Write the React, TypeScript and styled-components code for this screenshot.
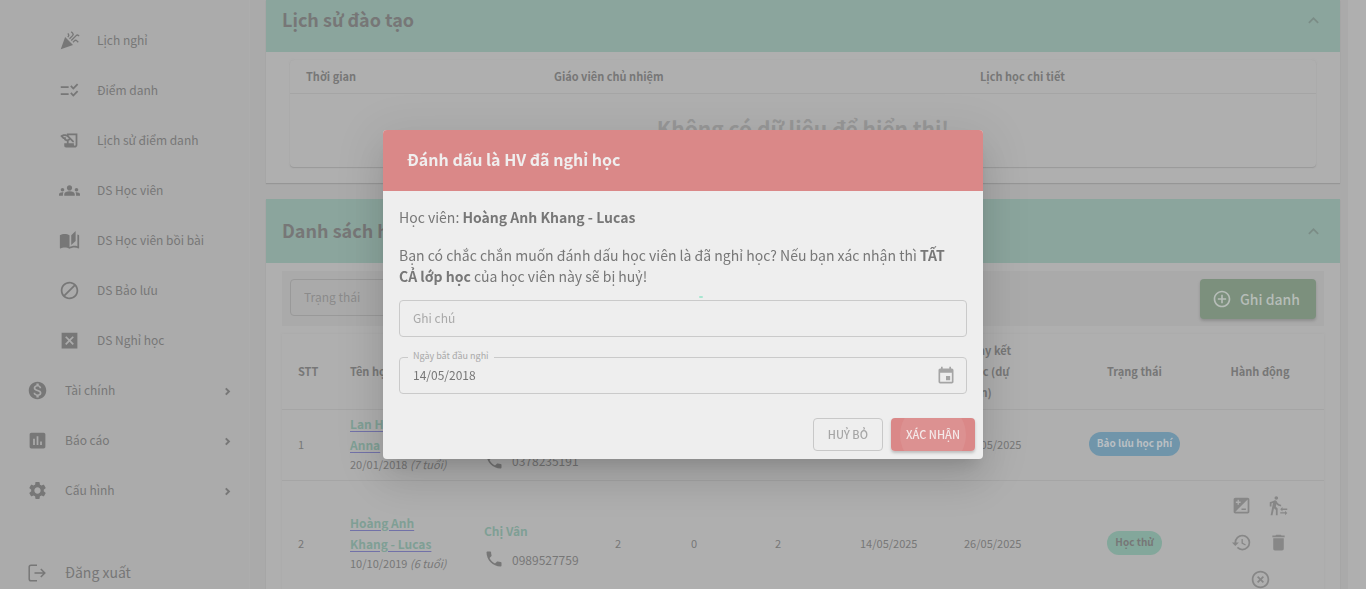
import React from "react";
import styled, { createGlobalStyle } from "styled-components";
import {
  MdCelebration,
  MdChecklistRtl,
  MdHistoryEdu,
  MdGroups,
  MdAutoStories,
  MdDoNotDisturbAlt,
  MdMonetizationOn,
  MdAssessment,
  MdSettings,
  MdControlPoint,
  MdPhone,
  MdEvent,
  MdIso,
  MdTransferWithinAStation,
  MdHistory,
  MdDelete,
  MdHighlightOff,
  MdExpandLess,
} from "react-icons/md";

const color = {
  page: "#aaaaaa",
  paper: "#afafaf",
  line: "#a5a5a5",
  text: "#777777",
  teal: "#8ba59d",
  tealText: "#7f9f95",
  green: "#7c907d",
  dialog: "#eeeeee",
  red: "#da8888",
};

const Global = createGlobalStyle`
  *, *::before, *::after { box-sizing: border-box; }
  body {
    margin: 0;
    background: ${color.paper};
    color: ${color.text};
    font-family: "Noto Sans CJK JP", "Noto Sans", sans-serif;
    font-size: 12px;
    line-height: 21px;
  }
  button, input { font: inherit; color: inherit; }
  button { cursor: pointer; }
  a { color: inherit; text-decoration: none; }
  b { font-weight: 700; }
`;

const Shell = styled.div`
  display: flex;
  height: 100vh;
  overflow: hidden;
`;

const Sidebar = styled.nav`
  flex: 0 0 250px;
  padding: 15px 17px 0 0;
  background: #ababab;
  border-right: 1px solid #adadad;
`;

const NavLink = styled.a<{ $nested?: boolean }>`
  display: flex;
  align-items: center;
  height: 50px;
  padding-left: ${(p) => (p.$nested ? 59 : 27)}px;
  svg { flex: none; }
`;

const NavText = styled.span`
  flex: 1;
  margin-left: 17px;
  padding-bottom: 2px;
`;

const LogoutLink = styled(NavLink)`
  margin-top: 33px;
  padding-left: 26px;
  font-size: 14px;
`;

const Caret = styled.svg`
  margin-top: 2px;
`;

const Main = styled.main`
  flex: 1;
  min-width: 0;
  padding: 0 8px 0 16px;
  margin-right: 18px;
  background: ${color.page};
`;

const Card = styled.section`
  margin-bottom: 16px;
  background: ${color.paper};
  box-shadow: 0 1px 1px #969696;
`;

const CardHeader = styled.button<{ $cut?: boolean }>`
  display: flex;
  align-items: center;
  justify-content: space-between;
  width: 100%;
  height: ${(p) => (p.$cut ? 52 : 64)}px;
  padding: ${(p) => (p.$cut ? "0 16px 12px" : "0 16px")};
  border: 0;
  background: ${color.teal};
  text-align: left;
  svg { color: #7b8c86; }
`;

const CardTitle = styled.span`
  padding-bottom: 2px;
  font-size: 18px;
  font-weight: 700;
`;

const HistoryBody = styled.div`
  padding: 8px 24px 16px;
`;

const HistoryTable = styled.table`
  width: 100%;
  table-layout: fixed;
  border-collapse: collapse;
  border-radius: 4px;
  box-shadow: 0 1px 1px #999999, 0 0 2px #a8a8a8;
  th {
    height: 33px;
    padding: 0 16px;
    border-bottom: 1px solid ${color.line};
    font-size: 11px;
    text-align: left;
  }
`;

const EmptyCell = styled.td`
  height: 74px;
  padding: 0 16px 3px;
  color: #979797;
  font-size: 21px;
  font-weight: 700;
  text-align: center;
`;

const ListBody = styled.div`
  padding: 8px 16px;
`;

const FilterBar = styled.div`
  display: flex;
  align-items: flex-start;
  justify-content: space-between;
  padding: 8px 8px 7px;
  background: ${color.page};
`;

const FilterInput = styled.input`
  width: 240px;
  height: 37px;
  padding: 0 13px 2px;
  border: 1px solid #999999;
  border-radius: 4px;
  background: transparent;
  &::placeholder { color: #8b8b8b; opacity: 1; }
`;

const EnrollButton = styled.button`
  display: flex;
  align-items: center;
  gap: 8px;
  height: 40px;
  padding: 0 16px 0 12px;
  border: 0;
  border-radius: 4px;
  background: ${color.green};
  color: #b6bdb8;
  font-size: 14px;
  font-weight: 500;
  box-shadow: 0 2px 3px #8f8f8f;
`;

const StudentTable = styled.table`
  width: 100%;
  margin-top: 8px;
  table-layout: fixed;
  border-collapse: collapse;
  box-shadow: 0 0 2px #a8a8a8;
  font-size: 11px;
  th, td {
    padding: 6px 16px;
    border-bottom: 1px solid ${color.line};
    text-align: left;
    white-space: nowrap;
  }
  td { padding: 4px 16px 5px; }
`;

const NameTd = styled.td`
  && { padding: 3px 16px 7px; }
`;

const CenterTh = styled.th`
  && { text-align: center; padding: 0; }
`;

const CenterTd = styled.td`
  && { text-align: center; padding: 6px 0 8px; }
`;

const StudentLink = styled.a`
  display: block;
  color: ${color.tealText};
  font-size: 12px;
  font-weight: 700;
  text-decoration: underline;
  text-decoration-color: #7272a8;
  text-underline-offset: 2px;
`;

const Birth = styled.div`
  line-height: 18px;
`;

const ContactName = styled.div`
  margin-top: 3px;
  color: ${color.tealText};
  font-size: 12px;
  font-weight: 700;
`;

const Phone = styled.a`
  display: flex;
  align-items: center;
  gap: 8px;
  margin-top: 8px;
  font-size: 12px;
`;

const Chip = styled.span<{ $tone: "blue" | "teal" }>`
  display: inline-block;
  height: 24px;
  padding: 0 8px;
  border-radius: 12px;
  background: ${(p) => (p.$tone === "blue" ? "#7095aa" : "#83a79b")};
  color: ${(p) => (p.$tone === "blue" ? "#b9bfc3" : color.text)};
  font-size: 10px;
  font-weight: 700;
  line-height: 22px;
`;

const Actions = styled.div`
  display: flex;
  flex-wrap: wrap;
  justify-content: center;
  width: 74px;
  margin: 0 auto;
`;

const ActionButton = styled.button`
  display: flex;
  align-items: center;
  justify-content: center;
  width: 37px;
  height: 37px;
  padding: 0;
  border: 0;
  background: transparent;
  color: #878787;
`;

const Overlay = styled.div`
  position: fixed;
  inset: 0;
  display: flex;
  align-items: center;
  justify-content: center;
`;

const Dialog = styled.div`
  width: 600px;
  max-width: calc(100% - 64px);
  overflow: hidden;
  border-radius: 4px;
  background: ${color.dialog};
  box-shadow: 0 11px 15px -7px rgba(0, 0, 0, 0.12), 0 24px 38px 3px rgba(0, 0, 0, 0.08),
    0 9px 46px 8px rgba(0, 0, 0, 0.08);
`;

const DialogTitle = styled.h2`
  margin: 0;
  padding: 19px 24px 21px;
  background: ${color.red};
  color: #f0eeee;
  font-size: 16px;
  font-weight: 700;
`;

const DialogBody = styled.div`
  display: flex;
  flex-direction: column;
  padding: 16px;
  font-size: 14px;
  p { margin: 0 0 17px; padding-right: 8px; }
  p + p { margin-bottom: 13px; }
`;

const Field = styled.div`
  position: relative;
  display: flex;
  align-items: center;
  height: 37px;
  padding-right: 8px;
  border: 1px solid #cacaca;
  border-radius: 4px;
  & + & { margin-top: 20px; }
`;

const FieldInput = styled.input`
  flex: 1;
  min-width: 0;
  height: 35px;
  padding: 0 13px 2px;
  border: 0;
  outline: 0;
  background: transparent;
  font-size: 12px;
  &::placeholder { color: #a9a9a9; opacity: 1; }
`;

const FloatingLabel = styled.label`
  position: absolute;
  top: -13px;
  left: 8px;
  padding: 0 5px;
  background: ${color.dialog};
  color: #a9a9a9;
  font-size: 9px;
`;

const PickerButton = styled.button`
  display: flex;
  padding: 2px;
  border: 0;
  background: transparent;
  color: #a5a5a5;
`;

const DialogActions = styled.div`
  display: flex;
  justify-content: flex-end;
  gap: 8px;
  padding: 8px;
`;

const DialogButton = styled.button<{ $primary?: boolean }>`
  position: relative;
  overflow: hidden;
  height: 33px;
  padding: 0 ${(p) => (p.$primary ? 15 : 14)}px;
  border: ${(p) => (p.$primary ? "0" : "1px solid #c8c8c8")};
  border-radius: 4px;
  background: ${(p) => (p.$primary ? color.red : "transparent")};
  color: ${(p) => (p.$primary ? "#f3e8e8" : "#a6a6a6")};
  font-size: 11px;
  font-weight: 500;
`;

const Elevated = styled.div`
  display: flex;
  border-radius: 4px;
  box-shadow: 0 2px 3px #bdbdbd;
`;

const Ripple = styled.span`
  position: absolute;
  top: 50%;
  left: 50%;
  width: 66px;
  height: 66px;
  border-radius: 50%;
  background: rgba(255, 255, 255, 0.08);
  transform: translate(-50%, -50%);
`;

const LoadingDot = styled.span`
  position: absolute;
  top: 50%;
  left: 50%;
  width: 4px;
  height: 2px;
  margin: 1px 0 0 16px;
  border-radius: 1px;
  background: #a8e6d0;
`;

const CrossSquare = () => (
  <svg width="21" height="21" viewBox="0 0 24 24" fill="currentColor" aria-hidden="true">
    <path d="M3 3v18h18V3H3zm14 12.59L15.59 17 12 13.41 8.41 17 7 15.59 10.59 12 7 8.41 8.41 7 12 10.59 15.59 7 17 8.41 13.41 12 17 15.59z" />
  </svg>
);

const LogoutIcon = () => (
  <svg width="22" height="22" viewBox="0 0 22 22" fill="none" stroke="currentColor" strokeWidth="1.5" aria-hidden="true">
    <path d="M11 3.2H5Q3.2 3.2 3.2 5V17Q3.2 18.8 5 18.8H11M8.5 11H18.5M14.8 7L18.8 11L14.8 15" />
  </svg>
);

const CaretRight = () => (
  <Caret width="9" height="9" viewBox="0 0 9 9" fill="none" stroke="currentColor" strokeWidth="2" aria-hidden="true">
    <path d="M2.8 1.4L5.9 4.5L2.8 7.6" />
  </Caret>
);

const nested = [
  { icon: <MdCelebration size={21} />, label: "Lịch nghỉ" },
  { icon: <MdChecklistRtl size={21} />, label: "Điểm danh" },
  { icon: <MdHistoryEdu size={21} />, label: "Lịch sử điểm danh" },
  { icon: <MdGroups size={21} />, label: "DS Học viên" },
  { icon: <MdAutoStories size={21} />, label: "DS Học viên bồi bài" },
  { icon: <MdDoNotDisturbAlt size={21} />, label: "DS Bảo lưu" },
  { icon: <CrossSquare />, label: "DS Nghỉ học" },
];

const groups = [
  { icon: <MdMonetizationOn size={21} />, label: "Tài chính" },
  { icon: <MdAssessment size={21} />, label: "Báo cáo" },
  { icon: <MdSettings size={21} />, label: "Cấu hình" },
];

const columnWidths = [52, 134, 131, 76, 84, 85, 104, 125, 123, 128];

type Student = {
  name: [string, string];
  birth: string;
  age: string;
  contact: string;
  phone: string;
  counts: number[];
  start: string;
  end: string;
  status: string;
  tone: "blue" | "teal";
  editable: boolean;
};

const students: Student[] = [
  {
    name: ["Lan Hương", "Anna"],
    birth: "20/01/2018",
    age: "(7 tuổi)",
    contact: "Chị Lan",
    phone: "0378235191",
    counts: [2, 0, 2],
    start: "14/05/2025",
    end: "26/05/2025",
    status: "Bảo lưu học phí",
    tone: "blue",
    editable: false,
  },
  {
    name: ["Hoàng Anh", "Khang - Lucas"],
    birth: "10/10/2019",
    age: "(6 tuổi)",
    contact: "Chị Vân",
    phone: "0989527759",
    counts: [2, 0, 2],
    start: "14/05/2025",
    end: "26/05/2025",
    status: "Học thử",
    tone: "teal",
    editable: true,
  },
];

const actions = [
  { label: "Điều chỉnh", icon: <MdIso size={21} /> },
  { label: "Chuyển lớp", icon: <MdTransferWithinAStation size={21} /> },
  { label: "Lịch sử", icon: <MdHistory size={21} /> },
  { label: "Xoá", icon: <MdDelete size={21} /> },
  { label: "Nghỉ học", icon: <MdHighlightOff size={21} /> },
];

export default function App() {
  return (
    <>
      <Global />
      <Shell>
        <Sidebar>
          {nested.map((item) => (
            <NavLink href="#" $nested key={item.label}>
              {item.icon}
              <NavText>{item.label}</NavText>
            </NavLink>
          ))}
          {groups.map((item) => (
            <NavLink href="#" key={item.label}>
              {item.icon}
              <NavText>{item.label}</NavText>
              <CaretRight />
            </NavLink>
          ))}
          <LogoutLink href="#">
            <LogoutIcon />
            <NavText>Đăng xuất</NavText>
          </LogoutLink>
        </Sidebar>
        <Main>
          <Card>
            <CardHeader $cut>
              <CardTitle>Lịch sử đào tạo</CardTitle>
              <MdExpandLess size={21} />
            </CardHeader>
            <HistoryBody>
              <HistoryTable>
                <colgroup>
                  <col style={{ width: 248 }} />
                  <col style={{ width: 426 }} />
                  <col style={{ width: 352 }} />
                </colgroup>
                <thead>
                  <tr>
                    <th>Thời gian</th>
                    <th>Giáo viên chủ nhiệm</th>
                    <th>Lịch học chi tiết</th>
                  </tr>
                </thead>
                <tbody>
                  <tr>
                    <EmptyCell colSpan={3}>Không có dữ liệu để hiển thị!</EmptyCell>
                  </tr>
                </tbody>
              </HistoryTable>
            </HistoryBody>
          </Card>
          <Card>
            <CardHeader>
              <CardTitle>Danh sách học tập</CardTitle>
              <MdExpandLess size={21} />
            </CardHeader>
            <ListBody>
              <FilterBar>
                <FilterInput placeholder="Trạng thái" aria-label="Trạng thái" />
                <EnrollButton>
                  <MdControlPoint size={20} />
                  Ghi danh
                </EnrollButton>
              </FilterBar>
              <StudentTable>
                <colgroup>
                  {columnWidths.map((width, i) => (
                    <col key={i} style={{ width }} />
                  ))}
                </colgroup>
                <thead>
                  <tr>
                    <th>STT</th>
                    <th>Tên học viên</th>
                    <th>Liên hệ</th>
                    <th>Số buổi</th>
                    <th>Đã học</th>
                    <th>Còn lại</th>
                    <th>Ngày<br />bắt đầu</th>
                    <th>Ngày kết<br />thúc (dự<br />kiến)</th>
                    <CenterTh>Trạng thái</CenterTh>
                    <CenterTh>Hành động</CenterTh>
                  </tr>
                </thead>
                <tbody>
                  {students.map((s, i) => (
                    <tr key={s.phone}>
                      <td>{i + 1}</td>
                      <NameTd>
                        <StudentLink href="#">
                          {s.name[0]}
                          <br />
                          {s.name[1]}
                        </StudentLink>
                        <Birth>
                          {s.birth} <em>{s.age}</em>
                        </Birth>
                      </NameTd>
                      <td>
                        <ContactName>{s.contact}</ContactName>
                        <Phone href={`tel:${s.phone}`}>
                          <MdPhone size={20} />
                          {s.phone}
                        </Phone>
                      </td>
                      {s.counts.map((count, j) => (
                        <td key={j}>{count}</td>
                      ))}
                      <td>{s.start}</td>
                      <td>{s.end}</td>
                      <CenterTd>
                        <Chip $tone={s.tone}>{s.status}</Chip>
                      </CenterTd>
                      <CenterTd>
                        {s.editable && (
                          <Actions>
                            {actions.map((a) => (
                              <ActionButton key={a.label} aria-label={a.label}>
                                {a.icon}
                              </ActionButton>
                            ))}
                          </Actions>
                        )}
                      </CenterTd>
                    </tr>
                  ))}
                </tbody>
              </StudentTable>
            </ListBody>
          </Card>
        </Main>
      </Shell>
      <Overlay>
        <Dialog role="dialog" aria-modal="true" aria-labelledby="dialog-title">
          <DialogTitle id="dialog-title">Đánh dấu là HV đã nghỉ học</DialogTitle>
          <DialogBody>
            <p>
              Học viên: <b>Hoàng Anh Khang - Lucas</b>
            </p>
            <p>
              Bạn có chắc chắn muốn đánh dấu học viên là đã nghỉ học? Nếu bạn xác nhận thì <b>TẤT CẢ lớp học</b> của
              học viên này sẽ bị huỷ!
            </p>
            <Field>
              <FieldInput placeholder="Ghi chú" aria-label="Ghi chú" />
            </Field>
            <Field>
              <FloatingLabel htmlFor="leave-date">Ngày bắt đầu nghỉ</FloatingLabel>
              <FieldInput id="leave-date" defaultValue="14/05/2018" />
              <PickerButton aria-label="Chọn ngày">
                <MdEvent size={20} />
              </PickerButton>
            </Field>
          </DialogBody>
          <DialogActions>
            <DialogButton>HUỶ BỎ</DialogButton>
            <Elevated>
              <DialogButton $primary>
                XÁC NHẬN
                <Ripple />
              </DialogButton>
            </Elevated>
          </DialogActions>
        </Dialog>
        <LoadingDot />
      </Overlay>
    </>
  );
}
